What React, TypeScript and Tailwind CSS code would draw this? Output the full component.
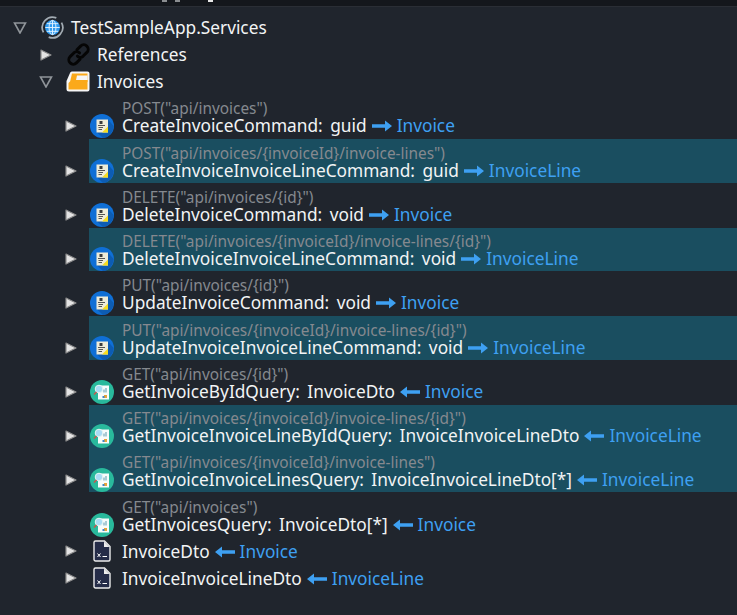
import { ReactNode } from 'react'

type Row = {
  route?: string
  name: string
  type?: string
  dir: 'in' | 'out'
  target: string
  icon: 'cmd' | 'query' | 'dto'
  selected?: boolean
  noToggle?: boolean
}

const ROWS: Row[] = [
  { route: 'POST("api/invoices")', name: 'CreateInvoiceCommand', type: 'guid', dir: 'out', target: 'Invoice', icon: 'cmd' },
  { route: 'POST("api/invoices/{invoiceId}/invoice-lines")', name: 'CreateInvoiceInvoiceLineCommand', type: 'guid', dir: 'out', target: 'InvoiceLine', icon: 'cmd', selected: true },
  { route: 'DELETE("api/invoices/{id}")', name: 'DeleteInvoiceCommand', type: 'void', dir: 'out', target: 'Invoice', icon: 'cmd' },
  { route: 'DELETE("api/invoices/{invoiceId}/invoice-lines/{id}")', name: 'DeleteInvoiceInvoiceLineCommand', type: 'void', dir: 'out', target: 'InvoiceLine', icon: 'cmd', selected: true },
  { route: 'PUT("api/invoices/{id}")', name: 'UpdateInvoiceCommand', type: 'void', dir: 'out', target: 'Invoice', icon: 'cmd' },
  { route: 'PUT("api/invoices/{invoiceId}/invoice-lines/{id}")', name: 'UpdateInvoiceInvoiceLineCommand', type: 'void', dir: 'out', target: 'InvoiceLine', icon: 'cmd', selected: true },
  { route: 'GET("api/invoices/{id}")', name: 'GetInvoiceByIdQuery', type: 'InvoiceDto', dir: 'in', target: 'Invoice', icon: 'query' },
  { route: 'GET("api/invoices/{invoiceId}/invoice-lines/{id}")', name: 'GetInvoiceInvoiceLineByIdQuery', type: 'InvoiceInvoiceLineDto', dir: 'in', target: 'InvoiceLine', icon: 'query', selected: true },
  { route: 'GET("api/invoices/{invoiceId}/invoice-lines")', name: 'GetInvoiceInvoiceLinesQuery', type: 'InvoiceInvoiceLineDto[*]', dir: 'in', target: 'InvoiceLine', icon: 'query', selected: true },
  { route: 'GET("api/invoices")', name: 'GetInvoicesQuery', type: 'InvoiceDto[*]', dir: 'in', target: 'Invoice', icon: 'query', noToggle: true },
  { name: 'InvoiceDto', dir: 'in', target: 'Invoice', icon: 'dto' },
  { name: 'InvoiceInvoiceLineDto', dir: 'in', target: 'InvoiceLine', icon: 'dto' },
]

function Collapsed() {
  return (
    <svg width="12" height="12" viewBox="0 0 12 12" className="shrink-0">
      <path d="M1 1 L11 6 L1 11 Z" fill="#e4e4e4" stroke="#8c8c8c" strokeWidth="1.2" strokeLinejoin="round" />
    </svg>
  )
}

function Expanded() {
  return (
    <svg width="14" height="12" viewBox="0 0 14 12" className="shrink-0">
      <path d="M1.5 1 H12.5 L7 11 Z" fill="#20252d" stroke="#8f9499" strokeWidth="1.6" />
    </svg>
  )
}

function GlobeIcon() {
  return (
    <svg width="23" height="23" viewBox="0 0 24 24" className="shrink-0">
      <path d="M2.6 17 A10.7 10.7 0 0 1 16 2" fill="none" stroke="#a3acb3" strokeWidth="1.8" />
      <path d="M21.4 7 A10.7 10.7 0 0 1 8 22" fill="none" stroke="#a3acb3" strokeWidth="1.8" />
      <circle cx="12" cy="12" r="7.8" fill="#2f9bf0" />
      <path d="M4.5 12 H19.5 M12 4.5 V19.5 M6 8 H18 M6 16 H18" stroke="#dff1ff" strokeWidth="1" />
      <ellipse cx="12" cy="12" rx="3.6" ry="7.5" fill="none" stroke="#dff1ff" strokeWidth="1" />
    </svg>
  )
}

function LinkIcon() {
  return (
    <svg width="23" height="23" viewBox="0 0 22 22" className="shrink-0" fill="none" stroke="#050505" strokeWidth="2.8" strokeLinecap="round">
      <path d="M9.5 6.5 L13 3 a4 4 0 0 1 6 6 L15.5 12.5 a4 4 0 0 1 -5.5 0" />
      <path d="M12.5 15.5 L9 19 a4 4 0 0 1 -6 -6 L6.5 9.5 a4 4 0 0 1 5.5 0" />
    </svg>
  )
}

function FolderIcon() {
  return (
    <svg width="24" height="21" viewBox="0 0 24 21" className="shrink-0">
      <path d="M6 0.5 H21.5 a2 2 0 0 1 2 2 V18.5 a2 2 0 0 1 -2 2 H3 a2.5 2.5 0 0 1 -2.5 -2.5 V10 L4 2 a2 2 0 0 1 2 -1.5 Z" fill="#f6f6f6" />
      <path d="M6 2.5 H21.5 V11 H4 Z" fill="#fba91a" />
      <path d="M11 4.5 H21.5 V9 H10 Z" fill="#f6f6f6" />
      <path d="M2.5 18.5 V12 L4 10.5 H12 L14 9 H21.5 V18.5 Z" fill="#fba91a" />
    </svg>
  )
}

function CmdIcon() {
  return (
    <svg width="24" height="24" viewBox="0 0 24 24" className="shrink-0">
      <circle cx="12" cy="12" r="12" fill="#0f6fd6" />
      <path d="M18 5.5 L23.6 12 A12 12 0 0 1 13 24 L6 17.5 Z" fill="#0d5cb3" />
      <rect x="6.5" y="5.5" width="11.5" height="13" fill="#efecd8" />
      <path d="M18 12.5 V18.5 H12 Z" fill="#f7dc1f" />
      <rect x="9.5" y="7" width="3" height="3" fill="#3c3c3c" />
      <path d="M8 11.5 H15 M8.5 13.5 H13 M8.5 15.5 H12" stroke="#555" strokeWidth="1" />
    </svg>
  )
}

function QueryIcon() {
  return (
    <svg width="24" height="24" viewBox="0 0 24 24" className="shrink-0">
      <circle cx="12" cy="12" r="12" fill="#29b99c" />
      <rect x="8" y="5.5" width="11" height="14" fill="#f8fcfb" />
      <path d="M14 12.5 V9.5 M16 12.5 V8" stroke="#5a9aae" strokeWidth="1" />
      <rect x="14" y="15" width="3" height="3" fill="#e8a53a" />
      <rect x="12.5" y="16" width="2" height="2" fill="#3f86c9" />
      <circle cx="9" cy="9" r="3.8" fill="#a9dcf5" stroke="#e6f6f4" strokeWidth="1" />
      <path d="M6.5 12 L4 14.5" stroke="#c9574f" strokeWidth="1.6" />
    </svg>
  )
}

function DtoIcon() {
  return (
    <svg width="18" height="22" viewBox="0 0 18 22" className="shrink-0">
      <path d="M2.5 1 H11.5 L17 6.5 V19.5 a1.5 1.5 0 0 1 -1.5 1.5 H2.5 A1.5 1.5 0 0 1 1 19.5 V2.5 A1.5 1.5 0 0 1 2.5 1 Z" fill="#252c48" stroke="#ececec" strokeWidth="1.4" />
      <path d="M11 1.5 V7 H16.5 Z" fill="#ececec" />
      <path d="M4.5 13.5 L7.5 17 M7.5 13.5 L4.5 17" stroke="#ffffff" strokeWidth="1" />
      <path d="M9.5 16.5 H14" stroke="#ffffff" strokeWidth="1" />
    </svg>
  )
}

function Arrow({ dir }: { dir: 'in' | 'out' }) {
  return (
    <svg width="20" height="12" viewBox="0 0 20 12" className="shrink-0">
      {dir === 'out' ? (
        <path d="M0 4.2 H13 V0.5 L20 6 L13 11.5 V7.8 H0 Z" fill="#3ea0f2" />
      ) : (
        <path d="M20 4.2 H7 V0.5 L0 6 L7 11.5 V7.8 H20 Z" fill="#3ea0f2" />
      )}
    </svg>
  )
}

function RowIcon({ icon }: { icon: Row['icon'] }) {
  if (icon === 'cmd') return <CmdIcon />
  if (icon === 'query') return <QueryIcon />
  return <div className="w-6 flex justify-center"><DtoIcon /></div>
}

function Item({ toggle, icon, label }: { toggle: ReactNode; icon: ReactNode; label: string }) {
  return (
    <div className="flex items-center h-[27px]">
      <div className="w-[26px] flex justify-center">{toggle}</div>
      <div className="w-[38px] flex justify-center">{icon}</div>
      <span className="text-[#f2f4f5] pt-px">{label}</span>
    </div>
  )
}

export default function App() {
  return (
    <div className="w-[737px] h-[615px] overflow-hidden bg-[#20252d] text-[17.3px] leading-[18px] font-['Noto_Sans','Open_Sans',sans-serif]">
      <div className="h-[7px] bg-[#14171c] border-b border-[#2a2e35] flex items-start">
        <div className="ml-[162px] w-[5px] h-[2px] bg-[#8a8d90]" />
        <div className="ml-[8px] w-[5px] h-[2px] bg-[#8a8d90]" />
        <div className="ml-[28px] w-[5px] h-[2px] bg-[#e8e8e8]" />
      </div>
      <div className="pt-[7px]">
        <div className="pl-[7px]">
          <Item toggle={<Expanded />} icon={<GlobeIcon />} label="TestSampleApp.Services" />
        </div>
        <div className="pl-[33px]">
          <Item toggle={<Collapsed />} icon={<LinkIcon />} label="References" />
          <Item toggle={<Expanded />} icon={<FolderIcon />} label="Invoices" />
        </div>
        <div>
          {ROWS.map((row, i) => {
            const h = row.route ? 'h-[26px]' : 'h-[27px]'
            const gapBelow = row.selected && !ROWS[i + 1]?.selected
            return (
              <div key={row.name} className={`flex ${row.route ? 'h-[44.25px]' : 'h-[27px]'}`}>
                <div className="w-[89px] flex items-end justify-end pr-[12px]">
                  <div className={`${h} flex items-center`}>
                    {!row.noToggle && <Collapsed />}
                  </div>
                </div>
                <div className={`flex-1 flex items-end pl-px ${row.selected ? 'bg-[#1a4e60]' : ''} ${gapBelow ? 'mb-px' : ''}`}>
                  <div className={`${h} flex items-center ${gapBelow ? '-mb-px' : ''}`}>
                    <RowIcon icon={row.icon} />
                  </div>
                  <div className={`ml-[8px] flex flex-col justify-end ${gapBelow ? '-mb-px' : ''}`}>
                    {row.route && <div className="text-[#85898f] text-[15.4px] leading-[16px] -mb-[4px]">{row.route}</div>}
                    <div className={`flex items-center gap-[5px] ${h} ${row.route ? '' : 'pt-px'}`}>
                      <span className="text-[#f2f4f5] whitespace-pre [word-spacing:3px]">{row.name}{row.type ? `: ${row.type}` : ''}</span>
                      <Arrow dir={row.dir} />
                      <span className="text-[#3ea0f2]">{row.target}</span>
                    </div>
                  </div>
                </div>
              </div>
            )
          })}
        </div>
      </div>
    </div>
  )
}
